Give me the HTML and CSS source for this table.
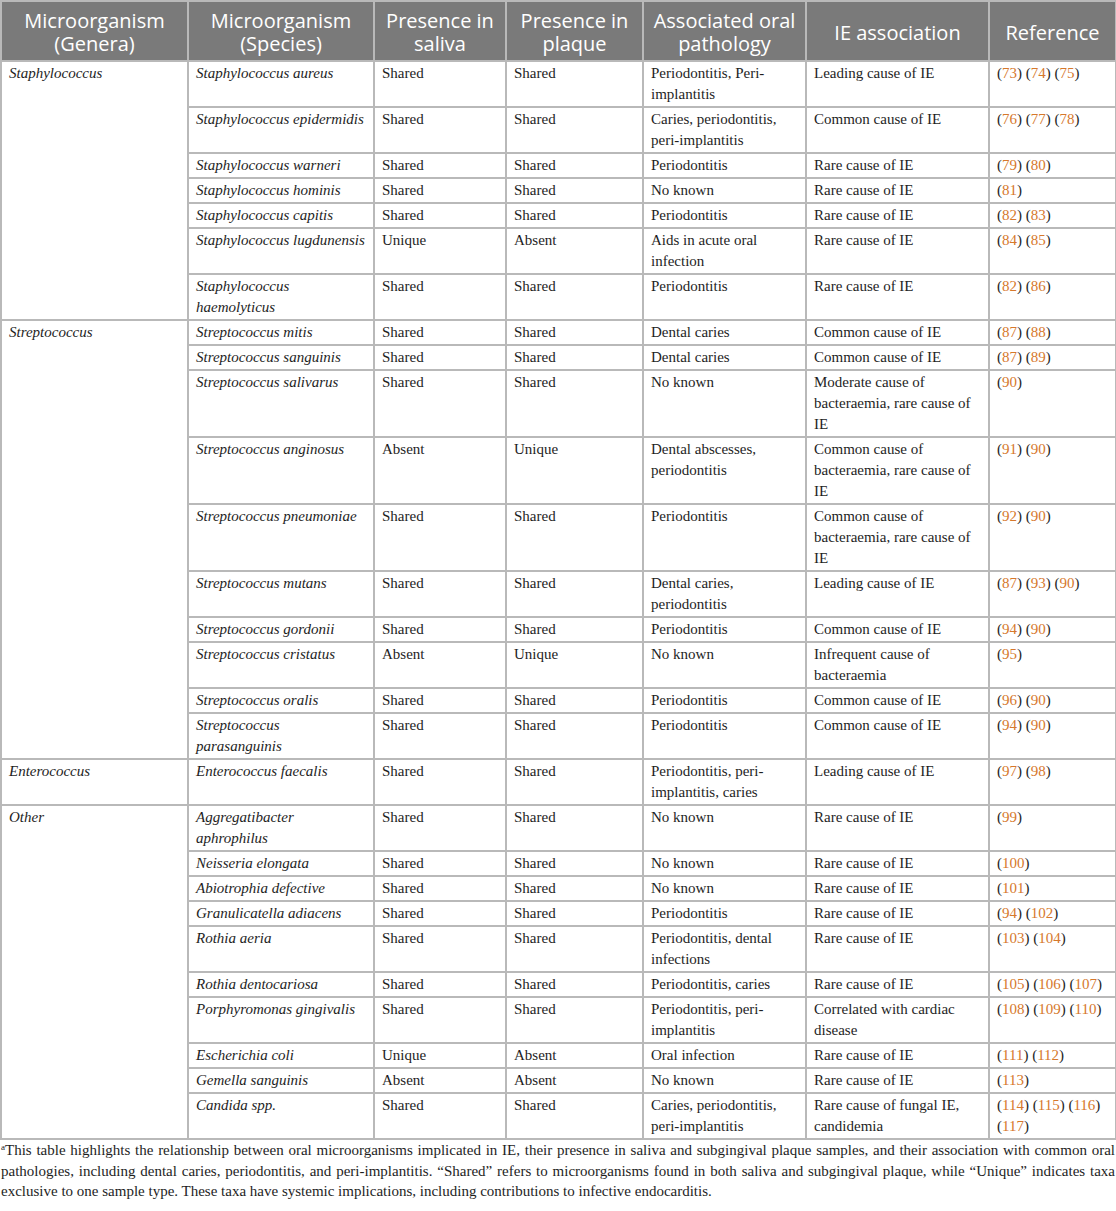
FILE: index.html
```html
<!DOCTYPE html>
<html>
<head>
<meta charset="utf-8">
<link rel="stylesheet" href="styles.css">
</head>
<body>
<table class="tbl">
<colgroup>
<col class="c1"><col class="c2"><col class="c3"><col class="c4"><col class="c5"><col class="c6"><col class="c7">
</colgroup>
<thead>
<tr>
<th>Microorganism (Genera)</th>
<th>Microorganism (Species)</th>
<th>Presence in saliva</th>
<th>Presence in plaque</th>
<th>Associated oral pathology</th>
<th>IE association</th>
<th>Reference</th>
</tr>
</thead>
<tbody>
<tr><td rowspan="7" class="it">Staphylococcus</td><td class="it">Staphylococcus aureus</td><td>Shared</td><td>Shared</td><td>Periodontitis, Peri-implantitis</td><td>Leading cause of IE</td><td>(<a>73</a>) (<a>74</a>) (<a>75</a>)</td></tr>
<tr><td class="it">Staphylococcus epidermidis</td><td>Shared</td><td>Shared</td><td>Caries, periodontitis, peri-implantitis</td><td>Common cause of IE</td><td>(<a>76</a>) (<a>77</a>) (<a>78</a>)</td></tr>
<tr><td class="it">Staphylococcus warneri</td><td>Shared</td><td>Shared</td><td>Periodontitis</td><td>Rare cause of IE</td><td>(<a>79</a>) (<a>80</a>)</td></tr>
<tr><td class="it">Staphylococcus hominis</td><td>Shared</td><td>Shared</td><td>No known</td><td>Rare cause of IE</td><td>(<a>81</a>)</td></tr>
<tr><td class="it">Staphylococcus capitis</td><td>Shared</td><td>Shared</td><td>Periodontitis</td><td>Rare cause of IE</td><td>(<a>82</a>) (<a>83</a>)</td></tr>
<tr><td class="it">Staphylococcus lugdunensis</td><td>Unique</td><td>Absent</td><td>Aids in acute oral infection</td><td>Rare cause of IE</td><td>(<a>84</a>) (<a>85</a>)</td></tr>
<tr><td class="it">Staphylococcus haemolyticus</td><td>Shared</td><td>Shared</td><td>Periodontitis</td><td>Rare cause of IE</td><td>(<a>82</a>) (<a>86</a>)</td></tr>

<tr><td rowspan="10" class="it">Streptococcus</td><td class="it">Streptococcus mitis</td><td>Shared</td><td>Shared</td><td>Dental caries</td><td>Common cause of IE</td><td>(<a>87</a>) (<a>88</a>)</td></tr>
<tr><td class="it">Streptococcus sanguinis</td><td>Shared</td><td>Shared</td><td>Dental caries</td><td>Common cause of IE</td><td>(<a>87</a>) (<a>89</a>)</td></tr>
<tr><td class="it">Streptococcus salivarus</td><td>Shared</td><td>Shared</td><td>No known</td><td>Moderate cause of bacteraemia, rare cause of IE</td><td>(<a>90</a>)</td></tr>
<tr><td class="it">Streptococcus anginosus</td><td>Absent</td><td>Unique</td><td>Dental abscesses, periodontitis</td><td>Common cause of bacteraemia, rare cause of IE</td><td>(<a>91</a>) (<a>90</a>)</td></tr>
<tr><td class="it">Streptococcus pneumoniae</td><td>Shared</td><td>Shared</td><td>Periodontitis</td><td>Common cause of bacteraemia, rare cause of IE</td><td>(<a>92</a>) (<a>90</a>)</td></tr>
<tr><td class="it">Streptococcus mutans</td><td>Shared</td><td>Shared</td><td>Dental caries, periodontitis</td><td>Leading cause of IE</td><td>(<a>87</a>) (<a>93</a>) (<a>90</a>)</td></tr>
<tr><td class="it">Streptococcus gordonii</td><td>Shared</td><td>Shared</td><td>Periodontitis</td><td>Common cause of IE</td><td>(<a>94</a>) (<a>90</a>)</td></tr>
<tr><td class="it">Streptococcus cristatus</td><td>Absent</td><td>Unique</td><td>No known</td><td>Infrequent cause of bacteraemia</td><td>(<a>95</a>)</td></tr>
<tr><td class="it">Streptococcus oralis</td><td>Shared</td><td>Shared</td><td>Periodontitis</td><td>Common cause of IE</td><td>(<a>96</a>) (<a>90</a>)</td></tr>
<tr><td class="it">Streptococcus parasanguinis</td><td>Shared</td><td>Shared</td><td>Periodontitis</td><td>Common cause of IE</td><td>(<a>94</a>) (<a>90</a>)</td></tr>

<tr><td class="it">Enterococcus</td><td class="it">Enterococcus faecalis</td><td>Shared</td><td>Shared</td><td>Periodontitis, peri-implantitis, caries</td><td>Leading cause of IE</td><td>(<a>97</a>) (<a>98</a>)</td></tr>

<tr><td rowspan="10" class="it">Other</td><td class="it">Aggregatibacter aphrophilus</td><td>Shared</td><td>Shared</td><td>No known</td><td>Rare cause of IE</td><td>(<a>99</a>)</td></tr>
<tr><td class="it">Neisseria elongata</td><td>Shared</td><td>Shared</td><td>No known</td><td>Rare cause of IE</td><td>(<a>100</a>)</td></tr>
<tr><td class="it">Abiotrophia defective</td><td>Shared</td><td>Shared</td><td>No known</td><td>Rare cause of IE</td><td>(<a>101</a>)</td></tr>
<tr><td class="it">Granulicatella adiacens</td><td>Shared</td><td>Shared</td><td>Periodontitis</td><td>Rare cause of IE</td><td>(<a>94</a>) (<a>102</a>)</td></tr>
<tr><td class="it">Rothia aeria</td><td>Shared</td><td>Shared</td><td>Periodontitis, dental infections</td><td>Rare cause of IE</td><td>(<a>103</a>) (<a>104</a>)</td></tr>
<tr><td class="it">Rothia dentocariosa</td><td>Shared</td><td>Shared</td><td>Periodontitis, caries</td><td>Rare cause of IE</td><td>(<a>105</a>) (<a>106</a>) (<a>107</a>)</td></tr>
<tr><td class="it">Porphyromonas gingivalis</td><td>Shared</td><td>Shared</td><td>Periodontitis, peri-implantitis</td><td>Correlated with cardiac disease</td><td>(<a>108</a>) (<a>109</a>) (<a>110</a>)</td></tr>
<tr><td class="it">Escherichia coli</td><td>Unique</td><td>Absent</td><td>Oral infection</td><td>Rare cause of IE</td><td>(<a>111</a>) (<a>112</a>)</td></tr>
<tr><td class="it">Gemella sanguinis</td><td>Absent</td><td>Absent</td><td>No known</td><td>Rare cause of IE</td><td>(<a>113</a>)</td></tr>
<tr><td class="it">Candida spp.</td><td>Shared</td><td>Shared</td><td>Caries, periodontitis, peri-implantitis</td><td>Rare cause of fungal IE, candidemia</td><td>(<a>114</a>) (<a>115</a>) (<a>116</a>) (<a>117</a>)</td></tr>
</tbody>
</table>
<p class="note"><sup>a</sup>This table highlights the relationship between oral microorganisms implicated in IE, their presence in saliva and subgingival plaque samples, and their association with common oral pathologies, including dental caries, periodontitis, and peri-implantitis. “Shared” refers to microorganisms found in both saliva and subgingival plaque, while “Unique” indicates taxa exclusive to one sample type. These taxa have systemic implications, including contributions to infective endocarditis.</p>
</body>
</html>
```

FILE: styles.css
```css
html, body {
  margin: 0;
  padding: 0;
  background: #ffffff;
}

body {
  font-family: "Liberation Serif", "Times New Roman", serif;
  color: #1e1e1e;
  font-size: 15px;
}

.tbl {
  width: 1115px;
  border-collapse: collapse;
  table-layout: fixed;
}

.c1 { width: 187px; }
.c2 { width: 186px; }
.c3 { width: 132px; }
.c4 { width: 137px; }
.c5 { width: 163px; }
.c6 { width: 183px; }
.c7 { width: 127px; }

.tbl th {
  background: #7a7a7a;
  color: #ffffff;
  font-family: "Open Sans", "Noto Sans", sans-serif;
  font-weight: 400;
  font-size: 20px;
  line-height: 23px;
  padding: 7px 4px 5px;
  text-align: center;
  vertical-align: middle;
  border: 2px solid #b9b9b9;
}

.tbl td {
  border: 2px solid #b9b9b9;
  padding: 1px 7px 1px;
  line-height: 21px;
  vertical-align: top;
  text-align: left;
}

.it {
  font-style: italic;
}

.tbl a {
  color: #d6782c;
  text-decoration: none;
}

.note {
  margin: 0;
  padding: 0 1px;
  font-size: 15px;
  line-height: 20.5px;
  text-align: justify;
}

.note sup {
  font-size: 9px;
  line-height: 0;
  vertical-align: 5px;
}
```
